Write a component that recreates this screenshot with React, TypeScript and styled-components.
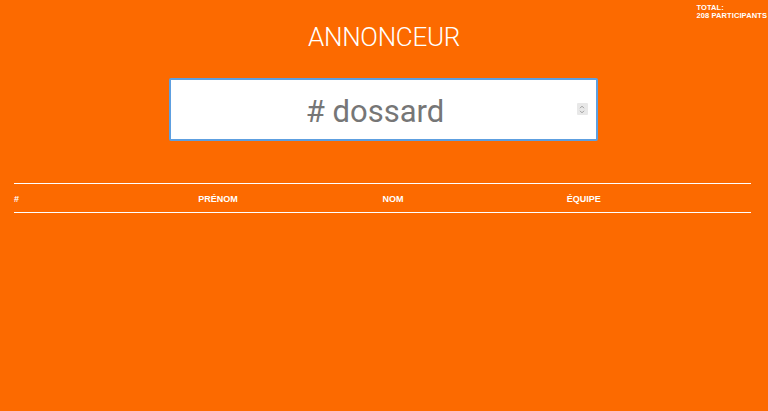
import React from "react";
import styled, { createGlobalStyle } from "styled-components";

const GlobalStyle = createGlobalStyle`
  html, body {
    margin: 0;
    padding: 0;
    background-color: #fc6a00;
  }
  body {
    font-family: "Liberation Sans", Arial, sans-serif;
  }
`;

const Page = styled.div`
  position: relative;
  min-height: 100vh;
  background-color: #fc6a00;
  color: white;
  padding-top: 22px;
  box-sizing: border-box;
`;

const Total = styled.div`
  position: absolute;
  top: 4px;
  right: 1px;
  font-size: 7.5px;
  font-weight: 700;
  line-height: 8px;
  letter-spacing: 0.1px;
`;

const Title = styled.h1`
  margin: 0;
  text-align: center;
  font-family: Roboto, "Liberation Sans", sans-serif;
  font-weight: 300;
  font-size: 26px;
  line-height: 30px;
  letter-spacing: -0.3px;
`;

const SearchBox = styled.div`
  position: relative;
  width: 429px;
  margin: 26px auto 0;
  left: -1px;
`;

const Input = styled.input`
  display: block;
  width: 100%;
  height: 63px;
  box-sizing: border-box;
  padding: 4px 16px 0 0;
  border: 2px solid #5d9fe0;
  border-radius: 2px;
  background: white;
  outline: none;
  text-align: center;
  font-family: Roboto, "Liberation Sans", sans-serif;
  font-size: 31px;
  color: #333;
  caret-color: #000;
  -moz-appearance: textfield;
  &::placeholder {
    color: #767676;
  }
  &::-webkit-outer-spin-button,
  &::-webkit-inner-spin-button {
    -webkit-appearance: none;
    margin: 0;
  }
`;

const Spinner = styled.span`
  position: absolute;
  right: 10px;
  top: 25px;
  width: 11px;
  height: 12px;
  background: #e8e8e8;
  border-radius: 1px;
  display: flex;
  align-items: center;
  justify-content: center;
`;

const Table = styled.div`
  margin: 42px 17px 0 14px;
`;

const HeadRow = styled.div`
  display: grid;
  grid-template-columns: repeat(4, 1fr);
  height: 28px;
  align-items: center;
  border-top: 1px solid white;
  border-bottom: 1px solid white;
`;

const HeadCell = styled.div`
  font-size: 9px;
  font-weight: 700;
  text-transform: uppercase;
  padding-top: 1px;
`;

export default function App() {
  return (
    <>
      <GlobalStyle />
      <Page>
        <Total>
          TOTAL:
          <br />
          208 PARTICIPANTS
        </Total>
        <Title>ANNONCEUR</Title>
        <SearchBox>
          <Input type="number" placeholder="# dossard" autoFocus />
          <Spinner>
            <svg width="6" height="9" viewBox="0 0 6 9">
              <path d="M1 3.2 L3 1.2 L5 3.2 M1 5.8 L3 7.8 L5 5.8" fill="none" stroke="#8a8a8a" strokeWidth="0.8" />
            </svg>
          </Spinner>
        </SearchBox>
        <Table>
          <HeadRow>
            <HeadCell>#</HeadCell>
            <HeadCell>Prénom</HeadCell>
            <HeadCell>Nom</HeadCell>
            <HeadCell>Équipe</HeadCell>
          </HeadRow>
        </Table>
      </Page>
    </>
  );
}
